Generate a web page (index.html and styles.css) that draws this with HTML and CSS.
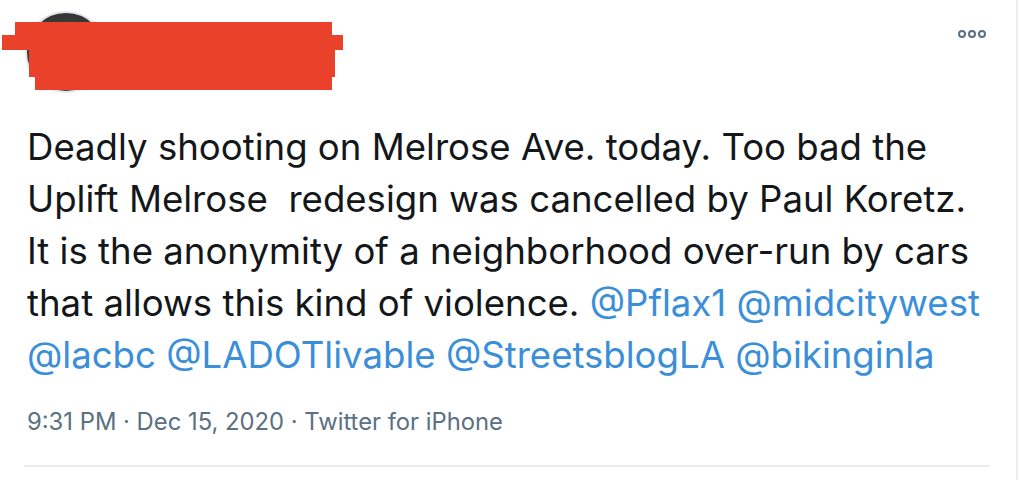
FILE: index.html
```html
<!DOCTYPE html>
<html>
<head>
<meta charset="utf-8">
<link rel="stylesheet" href="styles.css">
</head>
<body>
<article class="tweet">
  <header class="tweet-header">
    <div class="avatar"></div>
    <div class="redaction">
      <span class="red red-a"></span>
      <span class="red red-b"></span>
      <span class="red red-c"></span>
      <span class="red red-d"></span>
    </div>
    <button class="more" aria-label="More">
      <svg width="32" height="10" viewBox="0 0 32 10">
        <circle cx="5" cy="5" r="3" fill="none" stroke="#5b7083" stroke-width="2"/>
        <circle cx="15" cy="5" r="3" fill="none" stroke="#5b7083" stroke-width="2"/>
        <circle cx="25" cy="5" r="3" fill="none" stroke="#5b7083" stroke-width="2"/>
      </svg>
    </button>
  </header>
  <p class="tweet-text"><span>Deadly shooting on Melrose Ave. today. Too bad the Uplift Melrose  redesign was cancelled by Paul Koretz. It is the anonymity of a neighborhood over-run by cars that allows this kind of violence.</span> <a class="mention">@Pflax1</a> <a class="mention">@midcitywest</a> <a class="mention">@lacbc</a> <a class="mention">@LADOTlivable</a> <a class="mention">@StreetsblogLA</a> <a class="mention">@bikinginla</a></p>
  <div class="meta">9:31 PM · Dec 15, 2020 · Twitter for iPhone</div>
  <div class="divider"></div>
</article>
</body>
</html>
```
FILE: styles.css
```css
html, body {
  margin: 0;
  padding: 0;
  background: #ffffff;
}
body {
  width: 1020px;
  height: 480px;
  overflow: hidden;
  font-family: Inter, "Liberation Sans", sans-serif;
}
.tweet {
  box-sizing: border-box;
  width: 1018px;
  height: 480px;
  border-right: 2px solid #eceef0;
  padding-left: 27px;
  padding-right: 22px;
}
.tweet-header {
  position: relative;
  display: flex;
  align-items: flex-start;
  height: 121px;
}
.avatar {
  width: 82px;
  height: 82px;
  margin-left: -2px;
  margin-top: 11px;
  border-radius: 50%;
  box-sizing: border-box;
  border: 2px solid #e3e6ea;
  background: radial-gradient(circle at 50% 55%, #6a6260 0%, #3c3b3b 55%, #2c2c2c 100%);
}
.redaction {
  position: absolute;
  left: -27px;
  top: 0;
  width: 360px;
  height: 100px;
}
.red {
  position: absolute;
  background: #e9412a;
}
.red-a { left: 15px; top: 22px; width: 317px; height: 14px; }
.red-b { left: 2px; top: 35px; width: 341px; height: 15px; }
.red-c { left: 29px; top: 50px; width: 306px; height: 27px; }
.red-d { left: 35px; top: 76px; width: 297px; height: 14px; }
.more {
  margin-left: auto;
  margin-top: 29px;
  margin-right: 5px;
  padding: 0;
  border: 0;
  background: none;
  line-height: 0;
}
.tweet-text {
  margin: 0;
  font-size: 36.6px;
  line-height: 52px;
  color: #14171a;
  white-space: pre-wrap;
}
.mention {
  color: #3b8fd9;
  text-decoration: none;
}
.meta {
  margin-top: 26px;
  font-size: 23.8px;
  line-height: 30px;
  color: #5b7083;
}
.divider {
  margin-top: 28px;
  margin-left: -3px;
  width: 966px;
  height: 2px;
  background: #eaedf0;
}
```
